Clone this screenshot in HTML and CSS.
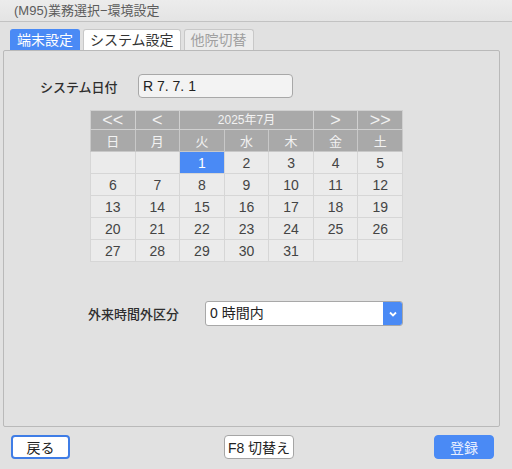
FILE: index.html
```html
<!DOCTYPE html>
<html lang="ja">
<head>
    <meta charset="UTF-8">
    <title>(M95)業務選択−環境設定</title>
    <link rel="stylesheet" href="styles.css">
</head>
<body>
    <div class="titlebar">(M95)業務選択−環境設定</div>

    <div class="tabs">
        <div class="tab active">端末設定</div>
        <div class="tab">システム設定</div>
        <div class="tab disabled">他院切替</div>
    </div>

    <div class="panel">
        <div class="date-row">
            <span class="label">システム日付</span>
            <div class="date-input">R 7. 7. 1</div>
        </div>

        <table class="calendar">
            <colgroup>
                <col><col><col><col><col><col><col>
            </colgroup>
            <tr class="nav">
                <td class="arrow">&lt;&lt;</td>
                <td class="arrow">&lt;</td>
                <td colspan="3" class="month">2025年7月</td>
                <td class="arrow">&gt;</td>
                <td class="arrow">&gt;&gt;</td>
            </tr>
            <tr class="week">
                <td>日</td><td>月</td><td>火</td><td>水</td><td>木</td><td>金</td><td>土</td>
            </tr>
            <tr>
                <td></td><td></td><td class="selected">1</td><td>2</td><td>3</td><td>4</td><td>5</td>
            </tr>
            <tr>
                <td>6</td><td>7</td><td>8</td><td>9</td><td>10</td><td>11</td><td>12</td>
            </tr>
            <tr>
                <td>13</td><td>14</td><td>15</td><td>16</td><td>17</td><td>18</td><td>19</td>
            </tr>
            <tr>
                <td>20</td><td>21</td><td>22</td><td>23</td><td>24</td><td>25</td><td>26</td>
            </tr>
            <tr>
                <td>27</td><td>28</td><td>29</td><td>30</td><td>31</td><td></td><td></td>
            </tr>
        </table>

        <div class="select-row">
            <span class="label">外来時間外区分</span>
            <div class="select">
                <span class="select-text">0 時間内</span>
                <span class="select-btn">
                    <svg width="10" height="8" viewBox="0 0 10 8"><path d="M2 2.5 L5 5.5 L8 2.5" fill="none" stroke="#fff" stroke-width="1.8"/></svg>
                </span>
            </div>
        </div>
    </div>

    <div class="footer">
        <button class="btn back">戻る</button>
        <button class="btn switch">F8 切替え</button>
        <button class="btn primary">登録</button>
    </div>
</body>
</html>
```

FILE: styles.css
```css
html, body {
    margin: 0;
    padding: 0;
}
body {
    width: 512px;
    height: 469px;
    background: #e1e1e1;
    font-family: "Liberation Sans", "Noto Sans CJK JP", sans-serif;
    color: #333;
    overflow: hidden;
}
.titlebar {
    height: 22px;
    line-height: 21px;
    padding-left: 14px;
    font-size: 13px;
    color: #5c5c5c;
    background: linear-gradient(to bottom, #ececec, #e4e4e4);
    border-bottom: 1px solid #c2c2c2;
    box-sizing: border-box;
}
.tabs {
    display: flex;
    gap: 3px;
    padding-left: 10px;
    margin-top: 7px;
}
.tab {
    height: 21px;
    line-height: 20px;
    padding: 0 6px;
    font-size: 14px;
    background: #fff;
    border: 1px solid #c8c8c8;
    border-bottom: none;
    border-radius: 3px 3px 0 0;
    box-sizing: border-box;
    color: #333;
}
.tab.active {
    background: #4a8af5;
    border-color: #4a8af5;
    color: #fff;
}
.tab.disabled {
    background: #ececec;
    color: #a0a0a0;
}
.panel {
    margin: 0 12px 0 3px;
    height: 377px;
    border: 1px solid #b9b9b9;
    border-radius: 2px;
    box-sizing: border-box;
    padding-top: 23px;
}
.date-row {
    display: flex;
    align-items: center;
    padding-left: 36px;
}
.label {
    font-size: 13px;
    font-weight: 500;
    color: #2e2e2e;
}
.date-row .label {
    width: 98px;
}
.date-input {
    width: 155px;
    height: 24px;
    line-height: 22px;
    box-sizing: border-box;
    border: 1px solid #a8a8a8;
    border-radius: 4px;
    background: #f3f3f3;
    padding-left: 4px;
    font-size: 14px;
    color: #222;
}
.calendar {
    margin: 12px 0 0 86px;
    border-collapse: collapse;
    table-layout: fixed;
    width: 313px;
    font-size: 14px;
}
.calendar td {
    height: 21px;
    padding: 0;
    text-align: center;
    background: #ebebeb;
    border: 1px solid #d6d6d6;
    color: #444;
}
.calendar .nav td {
    height: 18px;
    line-height: 16px;
    background: #a9a9a9;
    color: #f2f2f2;
    border-color: #d0d0d0;
    font-size: 18px;
}
.calendar .nav td.month {
    font-size: 12px;
}
.calendar .week td {
    height: 21px;
    background: #a9a9a9;
    color: #f2f2f2;
    border-color: #c8c8c8;
    font-size: 13px;
}
.calendar td.selected {
    background: #4a8af5;
    color: #fff;
}
.select-row {
    display: flex;
    align-items: center;
    padding-left: 84px;
    margin-top: 39px;
}
.select-row .label {
    width: 117px;
}
.select {
    display: flex;
    width: 198px;
    height: 25px;
    box-sizing: border-box;
    border: 1px solid #a8a8a8;
    border-radius: 3px;
    background: #fff;
    overflow: hidden;
}
.select-text {
    flex: 1;
    line-height: 23px;
    padding-left: 4px;
    font-size: 14px;
    color: #222;
}
.select-btn {
    width: 19px;
    background: #4a8af5;
    display: flex;
    align-items: center;
    justify-content: center;
}
.footer {
    display: flex;
    align-items: center;
    padding: 8px 18px 0 11px;
}
.btn {
    height: 24px;
    font-family: inherit;
    font-size: 14px;
    border-radius: 4px;
    background: #fff;
    border: 1px solid #a5a5a5;
    color: #222;
    padding: 0;
    box-sizing: border-box;
}
.btn.back {
    width: 59px;
    border: 2px solid #3f7de6;
}
.btn.switch {
    width: 70px;
    margin-left: 154px;
}
.btn.primary {
    width: 60px;
    margin-left: auto;
    background: #4a8af5;
    border-color: #4a8af5;
    color: #e8efff;
}
```
